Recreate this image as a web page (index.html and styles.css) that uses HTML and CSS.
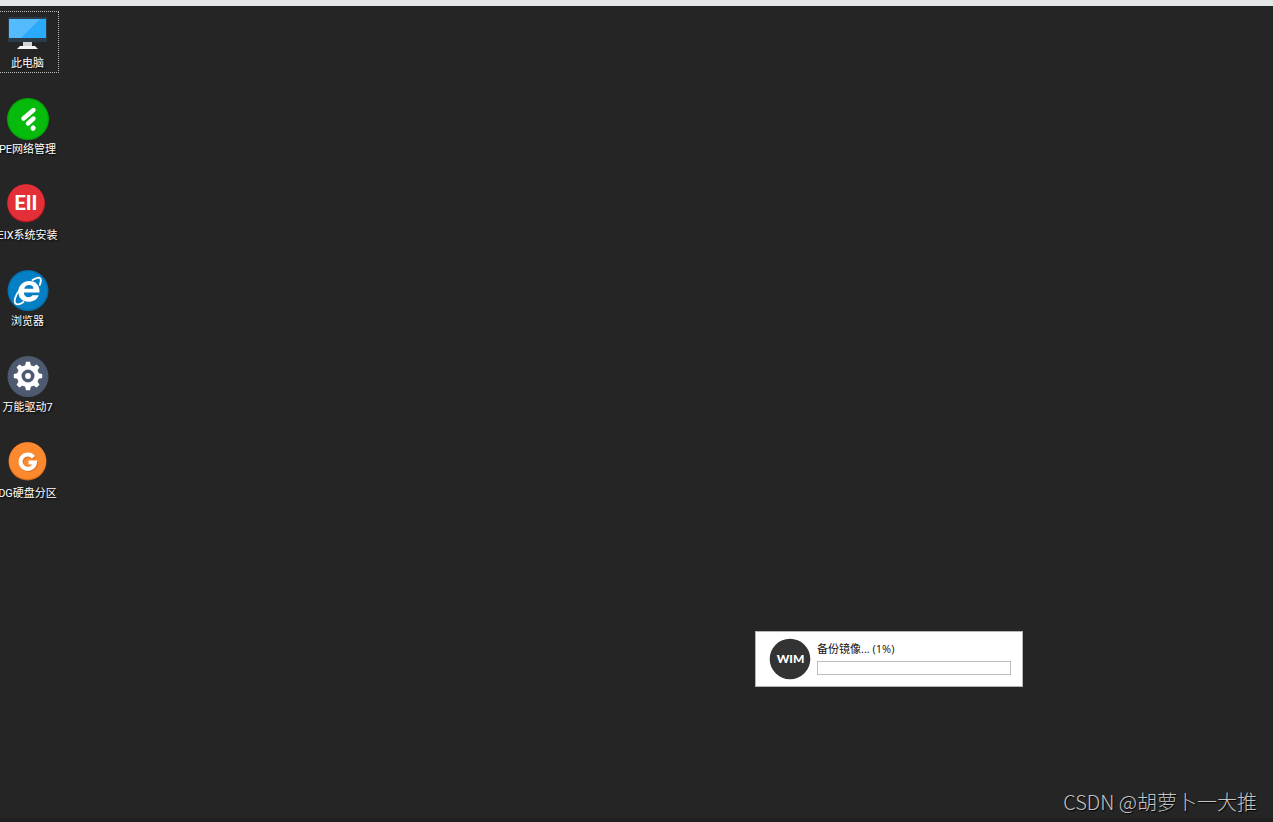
FILE: index.html
```html
<!DOCTYPE html>
<html lang="zh-CN">
  <head>
    <meta charset="UTF-8" />
    <meta name="viewport" content="width=device-width, initial-scale=1.0" />
    <title>PE 桌面</title>
    <link rel="stylesheet" href="styles.css">
  </head>
  <body>
    <div class="topbar"></div>
    <main class="desktop">
      <nav class="icons">
        <a class="icon selected" href="#computer">
          <svg width="42" height="42" viewBox="0 0 42 42">
            <rect x="1" y="5" width="39" height="25" rx="1" fill="#2b3b47" />
            <rect x="2" y="7" width="37" height="19" fill="#2baafd" />
            <path d="M2 7h31L14 26H2z" fill="#55bbff" />
            <path d="M16 30h9v4h-9z" fill="#d4d4d4" />
            <path d="M13 34h15l3 3H10z" fill="#f4f4f4" />
          </svg>
          <span>此电脑</span>
        </a>
        <a class="icon" href="#network">
          <svg width="42" height="42" viewBox="0 0 42 42">
            <circle cx="21" cy="21" r="21" fill="#05a80a" />
            <circle cx="21" cy="21" r="19.5" fill="#07bb0c" />
            <g stroke="#fff" stroke-width="4.4" stroke-linecap="round">
              <path d="M16.5 20.5L26.5 12" />
              <path d="M21 25.5L26.5 20.5" />
              <path d="M26 30.2L26.2 30" stroke-width="5" />
            </g>
          </svg>
          <span>PE网络管理</span>
        </a>
        <a class="icon" href="#install">
          <svg width="42" height="42" viewBox="0 0 42 42">
            <circle cx="19" cy="19.5" r="19" fill="#b9161f" />
            <circle cx="19" cy="18.7" r="18.5" fill="#e32f37" />
            <text class="eii" x="19" y="26" text-anchor="middle">EII</text>
          </svg>
          <span>EIX系统安装</span>
        </a>
        <a class="icon" href="#browser">
          <svg width="42" height="42" viewBox="0 0 42 42">
            <circle cx="21" cy="20.5" r="20.5" fill="#0470b2" />
            <circle cx="21" cy="20.5" r="19" fill="#0680c4" />
            <path d="M32.5 22.5C33 15.5 29 11 22.500 11 16 11 11.500 15.500 11.300 21.500 11 28 15.500 31.800 21.500 31.800c5 0 8.700-2.300 10.300-6.500h-6.300c-.8 1.300-2.200 2-4 2-2.700 0-4.500-1.600-4.700-4.800zM17.300 18.700c.4-2.200 2.200-3.600 4.800-3.600s4.200 1.400 4.400 3.600z" fill="#fff" />
            <path d="M13 19.500C8.500 24.500 6.500 31.500 8.500 33.500c1.500 1.500 5 .5 8-1.500M25.500 10C29.500 7.500 32.500 7 33.500 8.700c.8 1.500.3 3.800-.7 6.300" fill="none" stroke="#fff" stroke-width="1.800" stroke-linecap="round" />
          </svg>
          <span>浏览器</span>
        </a>
        <a class="icon" href="#driver">
          <svg width="42" height="42" viewBox="0 0 42 42">
            <circle cx="21" cy="20.5" r="20.5" fill="#4d5a70" />
            <g transform="translate(0 -1)">
              <g fill="#fff">
                <circle cx="21" cy="21" r="11" />
                <path id="tooth" d="M18 11l1-4.200h4l1 4.200z" />
                <use href="#tooth" transform="rotate(45 21 21)" />
                <use href="#tooth" transform="rotate(90 21 21)" />
                <use href="#tooth" transform="rotate(135 21 21)" />
                <use href="#tooth" transform="rotate(180 21 21)" />
                <use href="#tooth" transform="rotate(225 21 21)" />
                <use href="#tooth" transform="rotate(270 21 21)" />
                <use href="#tooth" transform="rotate(315 21 21)" />
              </g>
              <circle cx="21" cy="21" r="4.700" fill="#fff" stroke="#4d5a70" stroke-width="3.600" />
            </g>
          </svg>
          <span>万能驱动7</span>
        </a>
        <a class="icon" href="#disk">
          <svg width="42" height="42" viewBox="0 0 42 42">
            <circle cx="20.5" cy="19.5" r="19" fill="#d9691b" />
            <circle cx="20.5" cy="18.7" r="18.5" fill="#fd892f" />
            <path d="M26.500 15.200A7.200 7.200 0 1 0 28 20.500H21.500" fill="none" stroke="#b85a18" stroke-opacity=".5" stroke-width="4" transform="translate(1 1)" />
            <path d="M26.500 15.200A7.200 7.200 0 1 0 28 20.500H21.500" fill="none" stroke="#fff" stroke-width="4" />
          </svg>
          <span>DG硬盘分区</span>
        </a>
      </nav>
      <section class="dialog">
        <svg width="42" height="42" viewBox="0 0 42 42">
          <circle cx="21" cy="21" r="20.3" fill="#333" />
          <text class="wim" x="21.5" y="25" text-anchor="middle">WIM</text>
        </svg>
        <div class="status">
          <label for="backup">备份镜像... (1%)</label>
          <progress id="backup" value="0" max="100"></progress>
        </div>
      </section>
      <p class="watermark">CSDN @胡萝卜一大推</p>
    </main>
  </body>
</html>
```
FILE: styles.css
```css
* {
  box-sizing: border-box;
}
body {
  margin: 0;
  min-height: 100vh;
  display: flex;
  flex-direction: column;
  background: #252525;
  font-family: Roboto, "Noto Sans CJK SC", sans-serif;
  overflow: hidden;
}
.topbar {
  height: 6px;
  background: #e4e6e8;
}
.desktop {
  flex: 1;
  position: relative;
  border-bottom: 4px solid #202020;
}
.icons {
  display: flex;
  flex-direction: column;
  align-items: flex-start;
  gap: 24px;
  padding-top: 5px;
  margin-left: -4px;
}
.icon {
  width: 63px;
  height: 62px;
  border: 1px solid transparent;
  display: flex;
  flex-direction: column;
  align-items: center;
  color: #fff;
  font-size: 11px;
  line-height: 20px;
  text-decoration: none;
  white-space: nowrap;
  text-shadow: 1px 1px 2px #000;
}
.icon svg {
  flex: none;
}
.icon.selected {
  border: 1px dotted #bbb;
}
.eii {
  font: bold 20px Roboto, sans-serif;
  fill: #fff;
  text-shadow: none;
}
.wim {
  font: 900 12px Lato, sans-serif;
  fill: #fff;
}
.dialog {
  position: absolute;
  left: 755px;
  top: 625px;
  width: 268px;
  height: 56px;
  padding: 0 11px 0 13px;
  display: flex;
  align-items: center;
  gap: 6px;
  background: #fff;
  border: 1px solid #b5b5b5;
}
.status {
  flex: 1;
  display: flex;
  flex-direction: column;
  gap: 4px;
  padding-bottom: 2px;
}
.status label {
  color: #111;
  font-family: "Open Sans", "Noto Sans CJK SC", sans-serif;
  font-size: 11px;
  line-height: 16px;
}
progress {
  appearance: none;
  display: block;
  width: 100%;
  height: 14px;
  border: 1px solid #bcbcbc;
  background: #fff;
}
progress::-webkit-progress-bar {
  background: #fff;
}
progress::-webkit-progress-value {
  background: #06b025;
}
.watermark {
  position: absolute;
  right: 16px;
  bottom: 2px;
  margin: 0;
  color: #c4c4c4;
  font-family: "Noto Sans CJK SC", sans-serif;
  font-weight: 300;
  font-size: 20px;
  line-height: 28px;
  text-shadow: 1px 1px 1px #000;
}
```
